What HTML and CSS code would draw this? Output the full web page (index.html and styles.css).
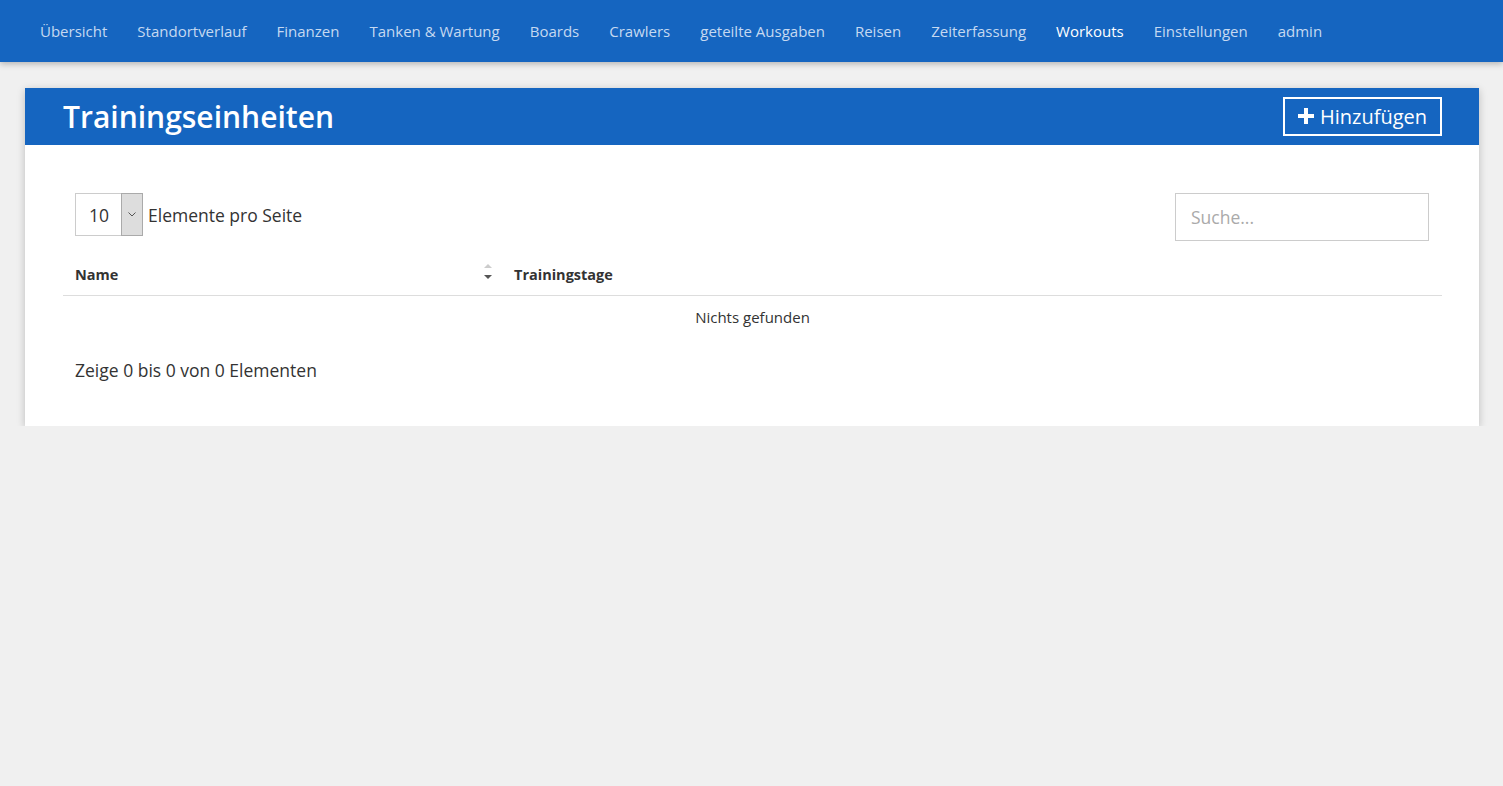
FILE: index.html
```html
<!DOCTYPE html>
<html lang="de">
<head>
<meta charset="utf-8">
<title>Trainingseinheiten</title>
<link rel="stylesheet" href="styles.css">
</head>
<body>
<nav class="topnav">
  <a class="nav-link" href="#">Übersicht</a>
  <a class="nav-link" href="#">Standortverlauf</a>
  <a class="nav-link" href="#">Finanzen</a>
  <a class="nav-link" href="#">Tanken &amp; Wartung</a>
  <a class="nav-link" href="#">Boards</a>
  <a class="nav-link" href="#">Crawlers</a>
  <a class="nav-link" href="#">geteilte Ausgaben</a>
  <a class="nav-link" href="#">Reisen</a>
  <a class="nav-link" href="#">Zeiterfassung</a>
  <a class="nav-link active" href="#">Workouts</a>
  <a class="nav-link" href="#">Einstellungen</a>
  <a class="nav-link" href="#">admin</a>
</nav>
<main class="content">
  <section class="card">
    <header class="card-header">
      <h1 class="card-title">Trainingseinheiten</h1>
      <button class="add-btn" type="button">
        <svg class="plus" width="16" height="16" viewBox="0 0 16 16"><path d="M6 0h4v6h6v4h-6v6h-4v-6h-6v-4h6z" fill="#fff"/></svg>
        <span>Hinzufügen</span>
      </button>
    </header>
    <div class="card-body">
      <div class="toolbar">
        <div class="perpage">
          <div class="select">
            <span class="select-value">10</span>
            <span class="select-arrow"><svg width="8" height="5" viewBox="0 0 8 5"><path d="M0.5 0.5L4 4L7.5 0.5" fill="none" stroke="#555" stroke-width="1"/></svg></span>
          </div>
          <span class="perpage-label">Elemente pro Seite</span>
        </div>
        <div class="search">Suche...</div>
      </div>
      <table class="table">
        <thead>
          <tr>
            <th class="col-name"><div class="th-inner"><span>Name</span>
              <svg class="sort" width="10" height="18" viewBox="0 0 10 18"><path d="M1 5L5 1L9 5z" fill="#ccc"/><path d="M1 12L5 16L9 12z" fill="#555"/></svg></div></th>
            <th class="col-days">Trainingstage</th>
          </tr>
        </thead>
        <tbody>
          <tr><td class="empty" colspan="2">Nichts gefunden</td></tr>
        </tbody>
      </table>
      <div class="info">Zeige 0 bis 0 von 0 Elementen</div>
    </div>
  </section>
</main>
</body>
</html>
```
FILE: styles.css
```css
* { box-sizing: border-box; }
html, body { margin: 0; padding: 0; }
body {
  background: #f0f0f0;
  font-family: "Open Sans", "Noto Sans", sans-serif;
  color: #333;
}
.topnav {
  height: 62px;
  background: #1565c0;
  display: flex;
  align-items: center;
  padding-left: 25px;
  box-shadow: 0 2px 6px rgba(0,0,0,0.25);
}
.nav-link {
  color: #c5d9f1;
  text-decoration: none;
  font-size: 15px;
  padding: 0 15px;
  line-height: 20px;
}
.nav-link.active { color: #fff; }
.content { padding: 26px 24px 0 25px; }
.card {
  background: #fff;
  box-shadow: 0 2px 8px rgba(0,0,0,0.22);
}
.card-header {
  background: #1565c0;
  height: 57px;
  display: flex;
  align-items: center;
  justify-content: space-between;
  padding: 0 37px 0 38px;
}
.card-title {
  margin: 0;
  color: #fff;
  font-size: 30px;
  font-weight: 600;
  line-height: 1;
  padding-top: 1px;
}
.add-btn {
  background: transparent;
  border: 2px solid #fff;
  color: #fff;
  height: 39px;
  width: 159px;
  margin-top: -1px;
  display: flex;
  align-items: center;
  justify-content: center;
  gap: 6px;
  font-family: inherit;
  font-size: 20px;
  padding: 0;
}
.card-body { padding: 48px 37px 44px 38px; }
.toolbar {
  display: flex;
  justify-content: space-between;
  align-items: flex-start;
  padding: 0 13px 0 12px;
}
.perpage { display: flex; align-items: center; gap: 5px; }
.select {
  width: 68px;
  height: 43px;
  border: 1px solid #ccc;
  display: flex;
}
.select-value {
  flex: 1;
  font-size: 17.5px;
  display: flex;
  align-items: center;
  justify-content: center;
  padding-left: 1px;
}
.select-arrow {
  width: 22px;
  background: #ddd;
  border: 1px solid #aaa;
  margin: -1px -1px -1px 0;
  display: flex;
  align-items: center;
  justify-content: center;
}
.perpage-label { font-size: 17.5px; }
.search {
  width: 254px;
  height: 48px;
  border: 1px solid #ccc;
  font-size: 17.5px;
  color: #aaa;
  padding: 0 15px;
  display: flex;
  align-items: center;
}
.table {
  width: 100%;
  border-collapse: collapse;
  margin-top: 14px;
}
.table th {
  text-align: left;
  font-size: 14.5px;
  font-weight: 700;
  padding: 0 12px;
  height: 40px;
  border-bottom: 1px solid #ddd;
}
.col-name { width: 439px; }
.th-inner { display: flex; align-items: center; justify-content: space-between; }
.sort { margin-right: -3px; margin-top: -6px; }
.empty {
  text-align: center;
  font-size: 15px;
  height: 44px;
}
.info {
  font-size: 17.5px;
  padding: 19px 12px 0;
  line-height: 24px;
}
```
